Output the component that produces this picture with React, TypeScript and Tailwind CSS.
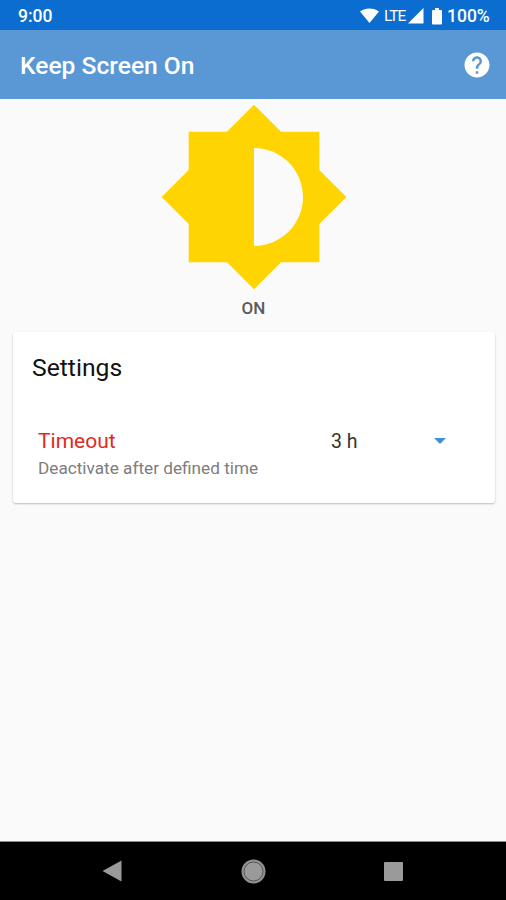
function StatusBar() {
  return (
    <div className="flex h-[30px] items-center justify-between bg-[#0a6dcf] pl-[18px] pr-[17px] text-white">
      <span className="pt-[3px] text-[17.5px] leading-none font-medium">9:00</span>
      <div className="flex items-center pt-[2px]">
        <svg className="mr-[5px] h-[16px] w-[19px]" viewBox="0 0 19 16" fill="currentColor">
          <path d="M0 3.4C5-.6 14-.6 19 3.4L9.5 15Z" />
        </svg>
        <span className="w-[21px] pt-px text-[15.5px] leading-none tracking-[-1px]">LTE</span>
        <svg className="ml-[3px] h-[16px] w-[16px]" viewBox="0 0 16 16" fill="currentColor">
          <path d="M0 15.5L15.5 0v15.5Z" />
        </svg>
        <svg className="ml-[8px] mr-[5px] h-[17px] w-[10px]" viewBox="0 0 10 17" fill="currentColor">
          <path d="M3 0h4v2h2q1 0 1 1v12.5q0 1-1 1H1q-1 0-1-1V3q0-1 1-1h2Z" />
        </svg>
        <span className="w-[42px] pt-px text-[17.5px] leading-none font-medium">100%</span>
      </div>
    </div>
  );
}

function AppBar() {
  return (
    <header className="flex h-[69px] items-center justify-between bg-[#5a98d5] pl-5 pr-[14px] text-white">
      <h1 className="pt-[3px] text-[24.6px] font-medium leading-none">Keep Screen On</h1>
      <svg className="h-[30px] w-[30px]" viewBox="0 0 24 24" fill="currentColor">
        <path d="M12 2C6.48 2 2 6.48 2 12s4.48 10 10 10 10-4.48 10-10S17.52 2 12 2zm1 17h-2v-2h2v2zm2.07-7.75l-.9.92C13.45 12.9 13 13.5 13 15h-2v-.5c0-1.1.45-2.1 1.17-2.83l1.24-1.26c.37-.36.59-.86.59-1.41 0-1.1-.9-2-2-2s-2 .9-2 2H8c0-2.21 1.79-4 4-4s4 1.79 4 4c0 .88-.36 1.68-.93 2.25z" />
      </svg>
    </header>
  );
}

function SettingsCard() {
  return (
    <section className="ml-[12.5px] mr-[11px] mt-[15px] h-[171px] rounded-[3px] bg-white pl-[19.5px] pt-[24px] shadow-[0_1px_2px_rgba(0,0,0,0.25)]">
      <h2 className="text-[24.7px] leading-6 text-[#111]">Settings</h2>
      <div className="flex pl-[6px] pt-[49px]">
        <div className="w-[293px]">
          <p className="text-[21px] leading-6 text-[#e02a20]">Timeout</p>
          <p className="pt-[3px] text-[17.2px] leading-6 text-[#7d7d7d]">Deactivate after defined time</p>
        </div>
        <div className="flex h-[26px] items-center">
          <span className="w-[103px] text-[19.5px] leading-6 text-[#333]">3 h</span>
          <svg className="-mt-[2px] h-[6px] w-[12px]" viewBox="0 0 12 6" fill="#3f8fd2">
            <path d="M0 0h12L6 6Z" />
          </svg>
        </div>
      </div>
    </section>
  );
}

function NavigationBar() {
  return (
    <nav className="flex h-[59px] items-center border-t border-[#8c8c8c] bg-black text-[#9a9a9a]">
      <svg className="ml-[102px] h-[22px] w-[20px]" viewBox="0 0 20 22" fill="currentColor">
        <path d="M.5 11L19.5.5v21Z" />
      </svg>
      <svg className="ml-[119px] h-[25px] w-[25px]" viewBox="0 0 25 25">
        <circle cx="12.5" cy="12.5" r="12" fill="#929292" />
        <circle cx="12.5" cy="12.5" r="9.5" fill="#9a9a9a" stroke="#555" strokeWidth="1" />
      </svg>
      <div className="ml-[118px] h-[19px] w-[19px] rounded-[1px] bg-[#9a9a9a]" />
    </nav>
  );
}

export default function App() {
  return (
    <div className="flex h-[900px] w-[506px] flex-col overflow-hidden bg-[#fafafa] font-['Roboto',sans-serif]">
      <StatusBar />
      <AppBar />
      <main className="flex-1">
        <svg className="ml-[155.7px] h-[196px] w-[196px]" viewBox="0 0 24 24" fill="#ffd400">
          <path d="M20 15.31L23.31 12 20 8.69V4h-4.69L12 .69 8.69 4H4v4.69L.69 12 4 15.31V20h4.69L12 23.31 15.31 20H20v-4.69zM12 18V6c3.31 0 6 2.69 6 6s-2.69 6-6 6z" />
        </svg>
        <p className="mt-[4px] pl-px text-center text-[17px] font-medium leading-[18px] text-[#5c5c5c]">ON</p>
        <SettingsCard />
      </main>
      <NavigationBar />
    </div>
  );
}
